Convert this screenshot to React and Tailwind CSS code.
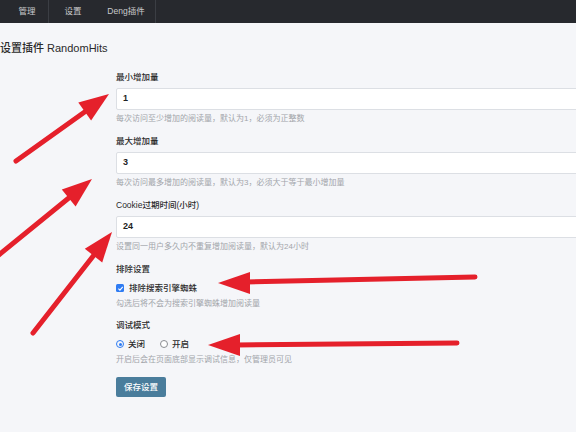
import React from 'react';

const font = "font-['Liberation_Sans','Noto_Sans_CJK_SC',sans-serif]";

function Field({ label, value, help }) {
  return (
    <div className="mb-[11px]">
      <div className="h-[12px] text-[8.5px] leading-[12px] font-medium text-[#2a2a2a] mb-[5px]">{label}</div>
      <div className="h-[22px] w-[520px] bg-white border border-[#dcdfe4] rounded-[2px] flex items-center pl-[6px] text-[9px] font-semibold text-[#222]">
        {value}
      </div>
      <div className="mt-[3px] h-[11px] text-[8px] leading-[11px] text-[#a2a5aa]">{help}</div>
    </div>
  );
}

function Arrow({ t, b, c1, c2, p }) {
  return (
    <g>
      <line x1={t[0]} y1={t[1]} x2={b[0]} y2={b[1]} stroke="#e5202b" strokeWidth="5" strokeLinecap="round" />
      <polygon points={`${p[0]},${p[1]} ${c1[0]},${c1[1]} ${c2[0]},${c2[1]}`} fill="#e5202b" />
    </g>
  );
}

export default function App() {
  return (
    <div className={`relative w-[576px] h-[432px] overflow-hidden bg-[#f5f6f9] ${font}`}>
      <nav className="h-[23px] bg-[#27292e] flex items-stretch pl-[6px] text-[8.5px] text-[#c9cacc]">
        <div className="w-[43px] flex items-center justify-center border-r border-[#3b3e44]">管理</div>
        <div className="w-[48px] flex items-center justify-center">设置</div>
        <div className="w-[59px] flex items-center justify-center border-r border-[#3b3e44]">Deng插件</div>
      </nav>

      <h1 className="mt-[18px] h-[14px] text-[11px] leading-[14px] text-[#2a2a2a] font-medium">设置插件 RandomHits</h1>

      <form className="ml-[116px] mt-[16px]">
        <Field label="最小增加量" value="1" help="每次访问至少增加的阅读量，默认为1，必须为正整数" />
        <Field label="最大增加量" value="3" help="每次访问最多增加的阅读量，默认为3，必须大于等于最小增加量" />
        <Field label="Cookie过期时间(小时)" value="24" help="设置同一用户多久内不重复增加阅读量，默认为24小时" />

        <div className="mb-[10px]">
          <div className="h-[12px] text-[8.5px] leading-[12px] font-medium text-[#2a2a2a] mb-[7px]">排除设置</div>
          <label className="h-[12px] flex items-center gap-[5px] text-[8.5px] font-medium text-[#2a2a2a]">
            <span className="w-[8px] h-[8px] rounded-[1.5px] bg-[#2f7cf3] flex items-center justify-center">
              <svg viewBox="0 0 10 10" className="w-[7px] h-[7px]">
                <path d="M2 5.2 L4.2 7.3 L8.2 2.8" fill="none" stroke="white" strokeWidth="1.6" />
              </svg>
            </span>
            排除搜索引擎蜘蛛
          </label>
          <div className="mt-[4px] h-[11px] text-[8px] leading-[11px] text-[#a2a5aa]">勾选后将不会为搜索引擎蜘蛛增加阅读量</div>
        </div>

        <div className="mb-[8px]">
          <div className="h-[12px] text-[8.5px] leading-[12px] font-medium text-[#2a2a2a] mb-[7px]">调试模式</div>
          <div className="h-[12px] flex items-center text-[8.5px] font-medium text-[#2a2a2a]">
            <span className="w-[8px] h-[8px] rounded-full border-[1.5px] border-[#2f7cf3] flex items-center justify-center">
              <span className="w-[3px] h-[3px] rounded-full bg-[#2f7cf3]" />
            </span>
            <span className="ml-[4px]">关闭</span>
            <span className="ml-[15px] w-[8px] h-[8px] rounded-full border border-[#8a8d92] bg-white" />
            <span className="ml-[4px]">开启</span>
          </div>
          <div className="mt-[4px] h-[11px] text-[8px] leading-[11px] text-[#a2a5aa]">开启后会在页面底部显示调试信息，仅管理员可见</div>
        </div>

        <button type="button" className="h-[20px] w-[50px] bg-[#4a7d9c] rounded-[2px] text-white text-[8.5px] font-medium">
          保存设置
        </button>
      </form>

      <svg className="absolute inset-0 pointer-events-none" width="576" height="432" viewBox="0 0 576 432">
        <Arrow t={[16, 161]} b={[86, 111]} p={[109, 94]} c1={[91.1, 120.4]} c2={[78.3, 102.6]} />
        <Arrow t={[-5, 258]} b={[70, 197]} p={[92, 179]} c1={[75.6, 206.4]} c2={[61.8, 189.4]} />
        <Arrow t={[33, 333]} b={[94, 255]} p={[112, 232]} c1={[102.2, 262.4]} c2={[84.8, 248.8]} />
        <Arrow t={[475, 277]} b={[246, 282]} p={[218, 283]} c1={[250, 272]} c2={[250, 294]} />
        <Arrow t={[457, 343]} b={[236, 345]} p={[208, 345]} c1={[240, 334]} c2={[240, 356]} />
      </svg>
    </div>
  );
}
